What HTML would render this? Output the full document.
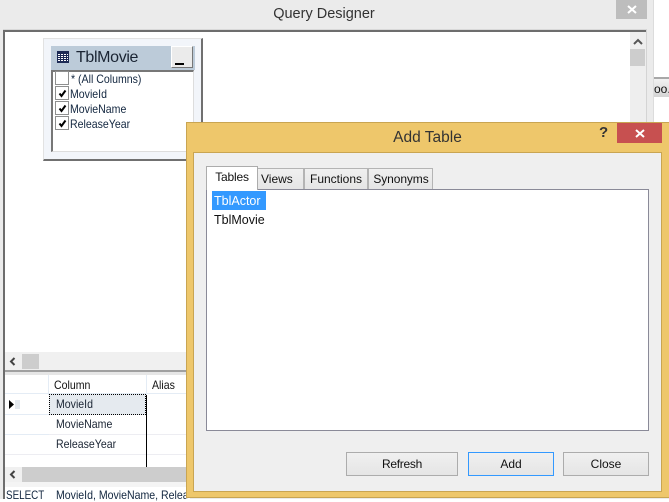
<!DOCTYPE html>
<html><head><meta charset="utf-8">
<style>
html,body{margin:0;padding:0}
body{width:669px;height:499px;overflow:hidden;position:relative;background:#fff;font-family:"Liberation Sans",sans-serif;color:#111}
div{position:absolute;box-sizing:border-box}
.t{white-space:nowrap;line-height:14px}
.n{font-size:12px;transform:scaleX(.88);transform-origin:0 0}
.cb{width:14px;height:14px;border:1px solid #8e8f8f;background:#fff}
.cb svg{position:absolute;left:1px;top:1px}
.btn{height:24px;top:452px;border:1px solid #acacac;background:linear-gradient(#f0f0f0,#e5e5e5);font-size:12px;text-align:center;line-height:22px;color:#111}
.tab{top:168px;height:21px;background:linear-gradient(#f0f0f0,#e5e5e5);border:1px solid #b4b4b4;border-bottom:0;font-size:12px;text-align:center;line-height:20px}
.rl{height:1px;background:#ededf2}
</style></head><body>
<div style="left:0;top:0;width:669px;height:499px;background:#ebebeb"></div>
<div style="left:654px;top:0;width:15px;height:78px;background:#fff"></div>
<div style="left:654px;top:77px;width:15px;height:2px;background:#a8a8a8"></div>
<div style="left:654px;top:79px;width:15px;height:18px;background:linear-gradient(#f2f2f2,#d4d4d4)"></div>
<div class="t" style="left:654px;top:82px;width:15px;overflow:hidden;font-size:12px">oo.</div>
<div style="left:654px;top:97px;width:15px;height:25px;background:#fff"></div>
<div style="left:646px;top:29px;width:1px;height:93px;background:#d4d4d4"></div>
<div style="left:653px;top:0;width:1px;height:122px;background:#dcdcdc"></div>
<div class="t" style="left:0;top:7px;width:648px;text-align:center;font-size:14.5px;color:#333">Query Designer</div>
<div style="left:616px;top:0;width:31px;height:19px;background:#bdbdbd"></div>
<svg style="position:absolute;left:627px;top:5px" width="10" height="9"><path d="M1 1L9 8M9 1L1 8" stroke="#fff" stroke-width="2"/></svg>

<div style="left:3px;top:29px;width:643px;height:1px;background:#d8d8d8"></div>
<div style="left:3px;top:30px;width:2px;height:469px;background:#6d6d6d"></div>
<div style="left:3px;top:30px;width:643px;height:2px;background:#6d6d6d"></div>
<div style="left:5px;top:32px;width:625px;height:320px;background:#fff"></div>
<div style="left:630px;top:32px;width:16px;height:90px;background:#eeeeee"></div>
<svg style="position:absolute;left:633px;top:38px" width="10" height="7"><path d="M1 6L5 2L9 6" stroke="#555" stroke-width="2" fill="none"/></svg>
<div style="left:630px;top:49px;width:15px;height:17px;background:#cdcdcd"></div>

<div style="left:43px;top:38px;width:160px;height:123px;background:#f2f5fa;border:1px solid #e2e2e2;border-right:2px solid #707070;border-bottom:2px solid #707070"></div>
<div style="left:51px;top:46px;width:144px;height:24px;background:#bccbd9"></div>
<svg style="position:absolute;left:57px;top:51px" width="12" height="12"><rect width="12" height="12" fill="#1c2a55"/><path d="M1 3.500h10M1 5.500h10M1 7.500h10M1 9.500h10" stroke="#fff" stroke-width="1" stroke-dasharray="2 1"/></svg>
<div class="t" style="left:76px;top:50px;font-size:16px;line-height:16px;letter-spacing:-.35px;color:#1a2433">TblMovie</div>
<div style="left:171px;top:46px;width:22px;height:22px;background:#ebebeb;border:1px solid #fff;border-right:1px solid #777;border-bottom:1px solid #777"></div>
<div style="left:175px;top:63px;width:9px;height:2px;background:#000"></div>
<div style="left:51px;top:70px;width:143px;height:82px;background:#fff;border:1px solid #ddd;border-top:2px solid #777;border-left:2px solid #777"></div>
<div class="cb" style="left:55px;top:71px"></div>
<div class="t n" style="left:71px;top:72px;color:#12263f">* (All Columns)</div>
<div class="cb" style="left:55px;top:86px"><svg width="11" height="11"><path d="M2.500 5.500L4.500 8L8.500 2.500" stroke="#000" stroke-width="2" fill="none"/></svg></div>
<div class="t n" style="left:70px;top:87px;color:#12263f">MovieId</div>
<div class="cb" style="left:55px;top:101px"><svg width="11" height="11"><path d="M2.500 5.500L4.500 8L8.500 2.500" stroke="#000" stroke-width="2" fill="none"/></svg></div>
<div class="t n" style="left:70px;top:102px;color:#12263f">MovieName</div>
<div class="cb" style="left:55px;top:116px"><svg width="11" height="11"><path d="M2.500 5.500L4.500 8L8.500 2.500" stroke="#000" stroke-width="2" fill="none"/></svg></div>
<div class="t n" style="left:70px;top:117px;color:#12263f">ReleaseYear</div>

<div style="left:5px;top:352px;width:185px;height:18px;background:#f0f0f0"></div>
<svg style="position:absolute;left:9px;top:357px" width="7" height="9"><path d="M5.500 1L2 4.500L5.500 8" stroke="#444" stroke-width="2" fill="none"/></svg>
<div style="left:22px;top:354px;width:17px;height:15px;background:#cdcdcd"></div>
<div style="left:5px;top:370px;width:185px;height:2px;background:#a0a0a0"></div>
<div style="left:5px;top:372px;width:185px;height:3px;background:#e6e6e6"></div>
<div style="left:5px;top:375px;width:185px;height:92px;background:#fff"></div>
<div style="left:48px;top:375px;width:1px;height:20px;background:#e4ecf5"></div>
<div style="left:146px;top:375px;width:1px;height:20px;background:#e4ecf5"></div>
<div class="t n" style="left:54px;top:378px">Column</div>
<div class="t n" style="left:152px;top:378px">Alias</div>
<div class="rl" style="left:5px;top:393px;width:185px;background:#e4ecf5"></div>
<svg style="position:absolute;left:9px;top:400px" width="6" height="9"><path d="M0 0L5 4.500L0 9Z" fill="#000"/></svg>
<div style="left:15px;top:400px;width:5px;height:9px;background:#e4e9ee"></div>
<div style="left:49px;top:394px;width:97px;height:21px;background:#e5eaef;border:1px dotted #000"></div>
<div class="t n" style="left:56px;top:397px;color:#1a2433">MovieId</div>
<div class="rl" style="left:5px;top:414px;width:44px;background:#e4ecf5"></div>
<div class="rl" style="left:49px;top:434px;width:141px"></div>
<div class="rl" style="left:5px;top:434px;width:44px;background:#e4ecf5"></div>
<div class="t n" style="left:56px;top:417px;color:#1a2433">MovieName</div>
<div class="t n" style="left:56px;top:437px;color:#1a2433">ReleaseYear</div>
<div class="rl" style="left:5px;top:454px;width:185px"></div>
<div style="left:146px;top:395px;width:1px;height:72px;background:#000"></div>
<div style="left:5px;top:467px;width:17px;height:16px;background:#f0f0f0"></div>
<svg style="position:absolute;left:9px;top:470px" width="7" height="9"><path d="M5.500 1L2 4.500L5.500 8" stroke="#444" stroke-width="2" fill="none"/></svg>
<div style="left:22px;top:467px;width:168px;height:15px;background:#cdcdcd"></div>
<div style="left:5px;top:482px;width:185px;height:5px;background:#f4f4f4"></div>
<div style="left:5px;top:487px;width:185px;height:12px;background:#fff"></div>
<div class="t n" style="left:6px;top:488px;color:#12263f;transform:scaleX(.82)">SELECT</div>
<div class="t n" style="left:56px;top:488px;width:149px;overflow:hidden;color:#12263f">MovieId, MovieName, ReleaseYear</div>

<div style="left:186px;top:122px;width:483px;height:376px;background:#eec76b;border:1px solid #c9a552;border-right:0"></div>
<div style="left:193px;top:152px;width:469px;height:340px;background:#efefef;border:1px solid #c9a552"></div>
<div class="t" style="left:186px;top:131px;width:483px;text-align:center;font-size:15.5px;color:#333">Add Table</div>
<div class="t" style="left:599px;top:126px;font-size:15px;font-weight:bold;color:#333">?</div>
<div style="left:617px;top:123px;width:45px;height:20px;background:#c75050"></div>
<svg style="position:absolute;left:635px;top:129px" width="10" height="9"><path d="M1 1L9 8M9 1L1 8" stroke="#fff" stroke-width="2"/></svg>

<div class="tab" style="left:258px;width:46px;border-left:0;text-align:left;padding-left:3px">Views</div>
<div class="tab" style="left:304px;width:64px">Functions</div>
<div class="tab" style="left:368px;width:65px;letter-spacing:-.1px;padding-left:1px">Synonyms</div>
<div style="left:206px;top:189px;width:443px;height:242px;background:#fff;border:1px solid #8a8a98"></div>
<div style="left:206px;top:166px;width:52px;height:24px;background:#fff;border:1px solid #acacac;border-bottom:0;font-size:12px;letter-spacing:-.2px;text-align:center;line-height:20px">Tables</div>
<div style="left:212px;top:191px;width:54px;height:19px;background:#3399ff"></div>
<div class="t" style="left:214px;top:194px;font-size:12.5px;color:#fff">TblActor</div>
<div class="t" style="left:214px;top:213px;font-size:12.5px;color:#111">TblMovie</div>

<div class="btn" style="left:346px;width:112px;letter-spacing:-.3px">Refresh</div>
<div class="btn" style="left:468px;width:86px;border-color:#3399ff">Add</div>
<div class="btn" style="left:563px;width:86px">Close</div>
</body></html>
